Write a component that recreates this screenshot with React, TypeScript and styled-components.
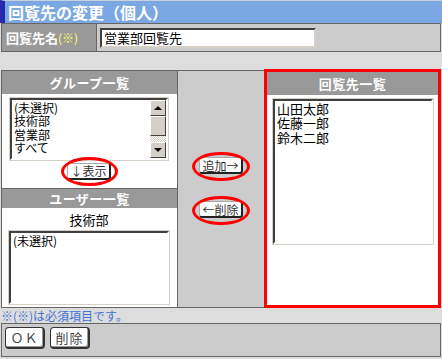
import React from 'react';
import styled, {createGlobalStyle} from 'styled-components';

const GlobalStyle = createGlobalStyle`
    html, body {
        margin: 0;
        padding: 0;
        background: #dddddd;
    }
    body {
        font-family: "Noto Sans CJK JP", "DejaVu Sans", sans-serif;
        font-size: 12px;
        color: #000;
    }
`;

const groups = ['(未選択)', '技術部', '営業部', 'すべて'];
const users = ['(未選択)'];
const recipients = ['山田太郎', '佐藤一郎', '鈴木二郎'];

const Page = styled.div`
    width: 442px;
    height: 359px;
    display: flex;
    flex-direction: column;
    overflow: hidden;
`;

const TitleBar = styled.div`
    height: 23px;
    box-sizing: border-box;
    background: #7ba7e3;
    border-top: 1px solid #c8d2de;
    border-left: 5px solid #2929ad;
    padding-left: 3px;
    display: flex;
    align-items: center;
    color: #fff;
    font-size: 16px;
    font-weight: 700;
    line-height: 1;
`;

const NameRow = styled.div`
    margin: 0 1px;
    height: 29px;
    box-sizing: border-box;
    border: 1px solid #666;
    display: grid;
    grid-template-columns: 95px 1fr;
`;

const NameLabel = styled.div`
    background: #999;
    border-right: 1px solid #666;
    display: flex;
    align-items: center;
    padding-left: 4px;
    color: #fff;
    font-weight: 700;
    font-size: 13px;
`;

const Required = styled.span`
    color: #ffff66;
    font-weight: 400;
    font-size: 12px;
`;

const NameCell = styled.div`
    background: #ccc;
    display: flex;
    align-items: center;
    padding-left: 3px;
`;

const TextInput = styled.div`
    width: 216px;
    height: 20px;
    box-sizing: border-box;
    background: #fff;
    border: 2px solid;
    border-color: #404040 #d4d0c8 #d4d0c8 #404040;
    display: flex;
    align-items: center;
    padding-left: 2px;
    font-size: 13px;
`;

const Main = styled.div`
    margin: 18px 1px 0;
    height: 238px;
    box-sizing: border-box;
    border-top: 1px solid #666;
    border-bottom: 1px solid #666;
    display: grid;
    grid-template-columns: 177px 86px 177px;
`;

const LeftPanel = styled.div`
    background: #fff;
    border-left: 1px solid #666;
    border-right: 1px solid #666;
    display: flex;
    flex-direction: column;
`;

const Header = styled.div<{$h: number}>`
    height: ${p => p.$h}px;
    flex: none;
    background: #999;
    display: flex;
    align-items: center;
    justify-content: center;
    color: #fff;
    font-weight: 700;
    font-size: 13px;
    letter-spacing: 0.5px;
`;

const GroupBody = styled.div`
    height: 95px;
    box-sizing: border-box;
    padding: 4px 9px 0 8px;
    border-bottom: 1px solid #666;
    display: flex;
    flex-direction: column;
    align-items: center;
`;

const ListBox = styled.div<{$h: number; $fs: number}>`
    position: relative;
    align-self: stretch;
    height: ${p => p.$h}px;
    box-sizing: border-box;
    background: #fff;
    border: 2px solid;
    border-color: #404040 #fff #fff #404040;
    outline: 1px solid #d4d0c8;
    padding: 1px 2px;
    font-size: ${p => p.$fs}px;
    line-height: ${p => p.$fs + 1.4}px;
    overflow: hidden;
`;

const ListItem = styled.div`
    white-space: nowrap;
`;

const ScrollBar = styled.div`
    position: absolute;
    top: 0;
    right: 0;
    bottom: 0;
    width: 16px;
    display: flex;
    flex-direction: column;
`;

const ScrollButton = styled.div`
    height: 16px;
    flex: none;
    box-sizing: border-box;
    background: #d4d0c8;
    border: 1px solid;
    border-color: #fff #404040 #404040 #fff;
    display: flex;
    align-items: center;
    justify-content: center;
`;

const Thumb = styled(ScrollButton)`
    height: 20px;
`;

const Track = styled.div`
    flex: 1;
    background-color: #fff;
    background-image: repeating-conic-gradient(#d4d0c8 0 25%, #fff 0 50%);
    background-size: 2px 2px;
`;

const Arrow = styled.div<{$down?: boolean}>`
    width: 0;
    height: 0;
    border-left: 4px solid transparent;
    border-right: 4px solid transparent;
    ${p => (p.$down ? 'border-top: 4px solid #000;' : 'border-bottom: 4px solid #000;')}
`;

const Marked = styled.span<{$l: number; $r: number; $t: number; $b: number}>`
    position: relative;
    display: inline-flex;

    &::after {
        content: '';
        position: absolute;
        top: ${p => -p.$t}px;
        bottom: ${p => -p.$b}px;
        left: ${p => -p.$l}px;
        right: ${p => -p.$r}px;
        border: 3px solid #f00;
        border-radius: 50%;
        pointer-events: none;
    }
`;

const SmallButton = styled.button`
    height: 17px;
    box-sizing: border-box;
    padding: 0 2px;
    margin: 0;
    background: #fff;
    border: 1px solid #555;
    border-right-width: 2px;
    border-bottom-width: 2px;
    border-color: #aaa #222 #222 #aaa;
    border-radius: 3px;
    font-family: inherit;
    font-size: 12px;
    line-height: 13px;
    color: #333;
`;

const ShowWrap = styled.div`
    margin-top: 2px;
`;

const UserBody = styled.div`
    flex: 1;
    padding: 0 8px 3px 7px;
    display: flex;
    flex-direction: column;
    align-items: center;
`;

const DeptName = styled.div`
    font-size: 13px;
    line-height: 15px;
    margin: 4px 0 4px;
`;

const Middle = styled.div`
    background: #ccc;
    display: flex;
    flex-direction: column;
    align-items: center;
    padding-top: 86px;
    gap: 27px;
`;

const RightPanel = styled.div`
    background: #fff;
    border: 3px solid #f00;
    margin: -2px 0 -1px;
    display: flex;
    flex-direction: column;
`;

const RightBody = styled.div`
    padding: 4px 5px 0 6px;
    display: flex;
    flex-direction: column;
`;

const Note = styled.div`
    height: 15px;
    padding-left: 1px;
    color: #3f74d4;
    font-size: 12px;
    line-height: 15px;
`;

const BottomBar = styled.div`
    margin: 0 1px;
    height: 34px;
    box-sizing: border-box;
    border: 1px solid #666;
    background: #ccc;
    display: flex;
    align-items: flex-start;
    padding: 3px 0 0 3px;
    gap: 5px;
`;

const FormButton = styled.button`
    width: 40px;
    height: 22px;
    box-sizing: border-box;
    margin: 0;
    padding: 0;
    background: #fff;
    border: 1px solid #333;
    border-right-width: 2px;
    border-bottom-width: 2px;
    border-radius: 4px;
    box-shadow: inset -1px -1px 0 #999;
    font-family: inherit;
    font-size: 13px;
    color: #444;
    letter-spacing: 1px;
`;

const Scroller = () => (
    <ScrollBar>
        <ScrollButton><Arrow/></ScrollButton>
        <Thumb/>
        <Track/>
        <ScrollButton><Arrow $down={true}/></ScrollButton>
    </ScrollBar>
);

const App = () => (
    <Page>
        <GlobalStyle/>
        <TitleBar>{'回覧先の変更（個人）'}</TitleBar>
        <NameRow>
            <NameLabel>
                {'回覧先名'}
                <Required>{'(※)'}</Required>
            </NameLabel>
            <NameCell>
                <TextInput>{'営業部回覧先'}</TextInput>
            </NameCell>
        </NameRow>
        <Main>
            <LeftPanel>
                <Header $h={23}>{'グループ一覧'}</Header>
                <GroupBody>
                    <ListBox
                        $h={62}
                        $fs={12}
                    >
                        {groups.map(g => <ListItem key={g}>{g}</ListItem>)}
                        <Scroller/>
                    </ListBox>
                    <ShowWrap>
                        <Marked
                            $l={6}
                            $r={7}
                            $t={6}
                            $b={6}
                        >
                            <SmallButton>{'↓表示'}</SmallButton>
                        </Marked>
                    </ShowWrap>
                </GroupBody>
                <Header $h={19}>{'ユーザー一覧'}</Header>
                <UserBody>
                    <DeptName>{'技術部'}</DeptName>
                    <ListBox
                        $h={73}
                        $fs={12}
                    >
                        {users.map(u => <ListItem key={u}>{u}</ListItem>)}
                    </ListBox>
                </UserBody>
            </LeftPanel>
            <Middle>
                <Marked
                    $l={7}
                    $r={7}
                    $t={5}
                    $b={7}
                >
                    <SmallButton>{'追加→'}</SmallButton>
                </Marked>
                <Marked
                    $l={7}
                    $r={7}
                    $t={5}
                    $b={7}
                >
                    <SmallButton>{'←削除'}</SmallButton>
                </Marked>
            </Middle>
            <RightPanel>
                <Header $h={23}>{'回覧先一覧'}</Header>
                <RightBody>
                    <ListBox
                        $h={145}
                        $fs={13}
                    >
                        {recipients.map(r => <ListItem key={r}>{r}</ListItem>)}
                    </ListBox>
                </RightBody>
            </RightPanel>
        </Main>
        <Note>{'※(※)は必須項目です。'}</Note>
        <BottomBar>
            <FormButton>{'ＯＫ'}</FormButton>
            <FormButton>{'削除'}</FormButton>
        </BottomBar>
    </Page>
);

export default App;
